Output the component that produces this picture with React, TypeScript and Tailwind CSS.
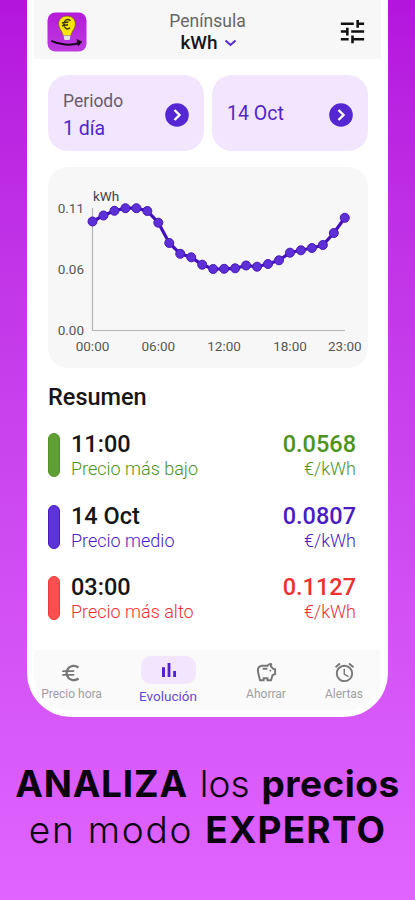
import React from 'react';
import clsx from 'clsx';
import { MdAlarm, MdEuro, MdOutlineSavings, MdTune } from 'react-icons/md';

const prices = [
  221.5, 215.5, 210.8, 208.2, 208.2, 211, 222.7, 243, 253.8, 257.3, 264.7, 269,
  268.8, 268.3, 265.5, 266.7, 264, 260.3, 252.7, 250.3, 248, 245, 233, 217.8,
];

const points = prices.map((y, i) => ({ x: 44.5 + i * 10.97, y: y - 167 }));

const hours = [
  { label: '00:00', x: 44.5 },
  { label: '06:00', x: 110.3 },
  { label: '12:00', x: 176.1 },
  { label: '18:00', x: 242 },
  { label: '23:00', x: 296.8 },
];

const summary = [
  { title: '11:00', subtitle: 'Precio más bajo', value: '0.0568', bar: 'bg-[#5f9f35] border-[#4f9420]', text: 'text-[#4c941c]' },
  { title: '14 Oct', subtitle: 'Precio medio', value: '0.0807', bar: 'bg-[#5d34d9] border-[#4a16c4]', text: 'text-[#4a1cc4]' },
  { title: '03:00', subtitle: 'Precio más alto', value: '0.1127', bar: 'bg-[#fd4f4f] border-[#f03838]', text: 'text-[#f0302f]' },
];

function AppLogo() {
  return (
    <svg width="40" height="40" viewBox="0 0 40 40">
      <defs>
        <linearGradient id="logo" x1="0" y1="0" x2="0" y2="1">
          <stop offset="0" stopColor="#b51ad8" />
          <stop offset="1" stopColor="#bd3ce0" />
        </linearGradient>
      </defs>
      <rect x="0.5" y="0.5" width="39" height="39" rx="8" fill="url(#logo)" />
      <path d="M20 4c-5 0-8.400 3.500-8.400 8 0 4.500 3.400 6.500 4.400 11.500h8c1-5 4.400-7 4.400-11.500 0-4.500-3.400-8-8.400-8z" fill="#f7e600" stroke="#6d5a10" strokeWidth="0.700" />
      <path d="M16.500 23.500h7l-1 4.500h-5z" fill="#e4e4e4" />
      <path d="M23.500 8.800c-3-2.600-6.500-.8-6.500 3.400s3.200 6 6 3.600M15 11l6.500-1M15 13.700l6-1" fill="none" stroke="#3b3406" strokeWidth="1.500" />
      <path d="M5 29.200c8 4 19 4.400 27 2.100" fill="none" stroke="#16051b" strokeWidth="2" strokeLinecap="round" />
      <path d="M29.500 27l5.800 2.700-4.300 4.800z" fill="#16051b" />
    </svg>
  );
}

function CircleArrow() {
  return (
    <svg width="24" height="24" viewBox="0 0 24 24" className="mt-[3px] shrink-0">
      <circle cx="12" cy="12" r="11.800" fill="#5527d3" />
      <path d="M9.500 7l5 5-5 5" fill="none" stroke="#fff" strokeWidth="2.400" />
    </svg>
  );
}

function PriceChart() {
  return (
    <svg width="320" height="201" viewBox="0 0 320 201" className="font-[Roboto,sans-serif] text-[13.500px]" fill="#585858">
      <path d="M44.500 41v122.500H297" fill="none" stroke="#b4b4b4" strokeWidth="1.200" />
      <text x="45" y="34" fill="#444">kWh</text>
      <g textAnchor="end">
        <text x="36" y="46">0.11</text>
        <text x="36" y="107">0.06</text>
        <text x="36" y="168">0.00</text>
      </g>
      <g textAnchor="middle">
        {hours.map((h) => (
          <text key={h.label} x={h.x} y="184">{h.label}</text>
        ))}
      </g>
      <polyline points={points.map((p) => `${p.x},${p.y}`).join(' ')} fill="none" stroke="#4410bd" strokeWidth="3.200" />
      {points.map((p) => (
        <circle key={p.x} cx={p.x} cy={p.y} r="4.500" fill="#5d2fd6" stroke="#4818b8" strokeWidth="1" />
      ))}
    </svg>
  );
}

export default function App() {
  return (
    <main className="flex h-[900px] w-[415px] flex-col items-center overflow-hidden bg-linear-to-b from-[#b414dd] to-[#e064ff] font-[Roboto,sans-serif]">
      <div className="flex h-[717px] w-[361px] shrink-0 flex-col rounded-b-[44px] bg-white px-[7px]">
        <header className="flex h-[59px] shrink-0 items-start justify-between bg-[#f7f7f7] pr-[13px] pl-[13px]">
          <div className="mt-3"><AppLogo /></div>
          <div className="mt-[10px] mr-[9px] flex flex-col items-center">
            <span className="text-[17.500px] leading-[22px] text-[#666]">Península</span>
            <span className="flex items-center gap-[6px] pl-[2px] text-[19px] leading-[22px] font-medium text-[#171717]">
              kWh
              <svg width="13" height="8" viewBox="0 0 13 8">
                <path d="M1.500 1.500l5 4.500 5-4.500" fill="none" stroke="#5527d3" strokeWidth="1.900" />
              </svg>
            </span>
          </div>
          <MdTune className="mt-[16px] h-[31px] w-[31px] text-[#111]" />
        </header>

        <div className="mt-4 flex gap-2 pr-[13px] pl-[14px]">
          <button className="flex h-[76px] w-[156px] items-center justify-between rounded-[20px] bg-[#f2e6ff] px-[15px] text-left">
            <div className="pt-[3px]">
              <div className="text-[17.500px] leading-[28px] text-[#665c70]">Periodo</div>
              <div className="text-[19.500px] leading-[27px] text-[#5125c8]">1 día</div>
            </div>
            <CircleArrow />
          </button>
          <button className="flex h-[76px] w-[156px] items-center justify-between rounded-[20px] bg-[#f2e6ff] px-[15px] text-left">
            <span className="pt-px text-[19.500px] text-[#5125c8]">14 Oct</span>
            <CircleArrow />
          </button>
        </div>

        <div className="mr-[13px] ml-[14px] mt-4 rounded-[20px] bg-[#f7f7f7]">
          <PriceChart />
        </div>

        <h2 className="mt-[15px] ml-[14px] text-[23.500px] leading-[28px] font-medium text-[#161616]">Resumen</h2>

        <div className="mt-[20px] flex flex-col gap-[22.500px] pr-[25px] pl-[14px]">
          {summary.map((item) => (
            <div key={item.title} className="flex h-[49px] items-start">
              <div className={clsx('mt-[2px] h-[44px] w-[12px] rounded-full border', item.bar)} />
              <div className="ml-[11px] flex-1">
                <div className="text-[23.500px] leading-[27px] font-medium text-[#161616]">{item.title}</div>
                <div className={clsx('text-[18px] leading-[22px] font-light', item.text)}>{item.subtitle}</div>
              </div>
              <div className={clsx('text-right', item.text)}>
                <div className="text-[23.500px] leading-[27px] font-medium">{item.value}</div>
                <div className="text-[18px] leading-[22px] font-light">€/kWh</div>
              </div>
            </div>
          ))}
        </div>

        <nav className="mt-auto mb-[7px] flex h-[60px] shrink-0 rounded-b-[34px] bg-[#fafafa] pt-[6px] text-[12px] leading-[14px] text-[#a0a0a0]">
          <div className="flex w-[74px] flex-col items-center">
            <MdEuro className="mt-[6px] h-[22px] w-[22px] text-[#777]" />
            <span className="mt-[3px] ml-px whitespace-nowrap">Precio hora</span>
          </div>
          <div className="flex w-[119px] flex-col items-center text-[#6848d8]">
            <div className="ml-[2px] flex h-[28px] w-[55px] items-center justify-center rounded-[10px] bg-[#f2e6ff]">
              <svg width="24" height="24" viewBox="0 0 24 24" fill="#5121cf">
                <path d="M5 9.200h3V19H5zM10.600 5h2.800v14h-2.800zM16.200 13H19v6h-2.800z" />
              </svg>
            </div>
            <span className="mt-[5px] ml-px text-[13.500px]">Evolución</span>
          </div>
          <div className="flex w-[78px] flex-col items-center">
            <MdOutlineSavings className="mt-[5px] h-[23px] w-[23px] text-[#777]" />
            <span className="mt-[3px]">Ahorrar</span>
          </div>
          <div className="flex w-[74px] flex-col items-center pl-[4px]">
            <MdAlarm className="mt-[5px] h-[23px] w-[23px] text-[#777]" />
            <span className="mt-[3px]">Alertas</span>
          </div>
        </nav>
      </div>

      <div className="mt-[44px] flex flex-col items-center font-[Inter,sans-serif] text-[37px] leading-[46px] whitespace-nowrap text-[#0b0210]">
        <p className="flex gap-[12px]">
          <span className="font-bold tracking-[0.8px]">ANALIZA</span>
          <span className="font-light">los</span>
          <span className="font-bold tracking-[0.5px]">precios</span>
        </p>
        <p className="flex gap-[12px]">
          <span className="font-light tracking-[1.800px]">en modo</span>
          <span className="font-bold tracking-[1.200px]">EXPERTO</span>
        </p>
      </div>
    </main>
  );
}
